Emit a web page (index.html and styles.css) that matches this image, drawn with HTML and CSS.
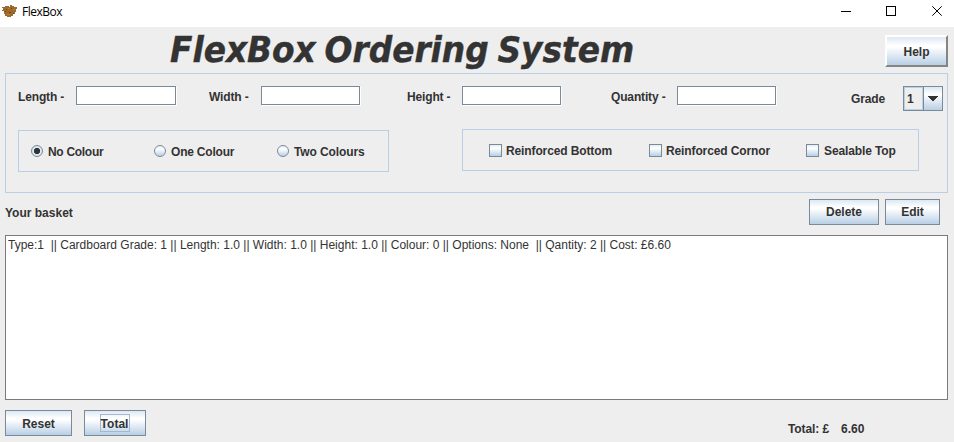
FILE: index.html
```html
<!DOCTYPE html>
<html lang="en">
<head>
<meta charset="utf-8">
<title>FlexBox</title>
<link rel="stylesheet" href="styles.css">
</head>
<body>
<div class="window">
  <header class="titlebar">
    <svg class="app-icon" width="15" height="13" viewBox="0 0 15 13"><path fill="#9b6a2c" d="M0 2h3V1h4v1h1V0h2v1h2v1h3v2h-1v3h-1v2h-2v2H9v1H5v-1H3V9H2V6H0V5h1V3H0z"/><path fill="#6d4218" d="M4 4h1v1H4zM9 3h1v1H9zM7 7h2v1H7zM3 6h1v1H3zM11 8h1v1h-1z"/><path fill="#b97c38" d="M6 3h2v1H6zM11 4h2v1h-2zM5 9h3v1H5z"/></svg>
    <span class="app-name">FlexBox</span>
    <svg class="controls" width="102" height="12" viewBox="0 0 102 12" fill="none" stroke="#000"><path d="M0 6.500h10M45.500 1.500h9v9h-9z" shape-rendering="crispEdges"/><path d="M91.300 1.300l9.400 9.400M100.700 1.300l-9.400 9.400"/></svg>
  </header>
  <div class="heading">
    <h1>FlexBox Ordering System</h1>
    <button class="help">Help</button>
  </div>
  <main class="order">
    <div class="fields">
      <label class="length">Length -</label><input class="w100">
      <label class="width">Width -</label><input>
      <label class="height">Height -</label><input>
      <label class="quantity">Quantity -</label><input>
      <label class="grade">Grade</label>
      <div class="combo"><span>1</span><i><svg width="10" height="5" viewBox="0 0 10 5" shape-rendering="crispEdges"><path fill="#333" d="M0 0h10v1H9v1H8v1H7v1H6v1H4V4H3V3H2V2H1V1H0z"/></svg></i></div>
    </div>
    <div class="choices">
      <div class="group colours">
        <div class="choice"><i class="radio on"></i><span class="t-no">No Colour</span></div>
        <div class="choice"><i class="radio"></i><span class="t-one">One Colour</span></div>
        <div class="choice"><i class="radio"></i><span class="t-two">Two Colours</span></div>
      </div>
      <div class="group options">
        <div class="choice bottom"><i class="check"></i><span>Reinforced Bottom</span></div>
        <div class="choice corner"><i class="check"></i><span>Reinforced Cornor</span></div>
        <div class="choice top"><i class="check"></i><span>Sealable Top</span></div>
      </div>
    </div>
  </main>
  <div class="basket-head">
    <span class="basket-title">Your basket</span>
    <button class="delete">Delete</button>
    <button class="edit">Edit</button>
  </div>
  <div class="basket">Type:1  || Cardboard Grade: 1 || Length: 1.0 || Width: 1.0 || Height: 1.0 || Colour: 0 || Options: None  || Qantity: 2 || Cost: £6.60</div>
  <footer>
    <button class="reset">Reset</button>
    <button class="total"><span>Total</span></button>
    <span class="sum-label">Total: £</span><span class="sum">6.60</span>
  </footer>
</div>
</body>
</html>
```
FILE: styles.css
```css
* { box-sizing: border-box; }
body { margin: 0; background: #eee; color: #333; font: bold 12px/14px "Liberation Sans", Arial, sans-serif; overflow: hidden; }
.window { width: 954px; height: 442px; }
.titlebar { height: 27px; background: #fff; display: flex; align-items: flex-start; color: #000; }
.app-icon { margin: 5px 0 0 2px; }
.app-name { margin: 5px 0 0 5px; width: 819px; font: 12px/14px "Open Sans", sans-serif; letter-spacing: -0.5px; }
.controls { margin-top: 5px; }
.heading { height: 46px; display: flex; }
h1 { margin: 2px 0 0 170px; width: 715px; font: italic bold 35px/42px "DejaVu Sans", sans-serif; font-stretch: condensed; letter-spacing: 0; word-spacing: -2.5px; -webkit-text-stroke: 0.4px #333; white-space: nowrap; transform: scaleX(1.042); transform-origin: 0 0; }
.heading { position: relative; }
button { font: inherit; color: inherit; padding: 0; height: 26px; border: 1px solid #7a8a99; background: linear-gradient(#dde8f3 0%, #fff 30%, #fff 36%, #b8cfe5 100%); text-align: center; }
.help { width: 63px; height: 32px; margin-top: 8px; padding-top: 1px; border: 2px solid; border-color: #fff #858585 #858585 #fff; }
.order { margin-left: 5px; width: 943px; height: 120px; border: 1px solid #b8cfe5; }
.fields { display: flex; height: 56px; padding: 12px 0 0 12px; }
.fields label { margin-top: 4px; height: 14px; white-space: nowrap; letter-spacing: -0.15px; }
.length { width: 58px; }
.width { width: 52px; margin-left: 33px; }
.height { width: 55px; margin-left: 47px; }
.quantity { width: 66px; margin-left: 50px; }
.fields .grade { width: 52px; margin: 6px 0 0 75px; }
input { width: 99px; height: 19px; padding: 0; border: 1px solid #7a8a99; background: #fff; border-radius: 0; box-shadow: 1px 1px #fff; }
.w100 { width: 100px; }
.combo { width: 40px; height: 25px; border: 1px solid #7a8a99; display: flex; }
.combo span { width: 19px; border: 1px solid #b8cfe5; padding: 4px 0 0 2px; }
.combo i { width: 19px; border-left: 1px solid #7a8a99; background: linear-gradient(#dde8f3, #fff 32%, #b8cfe5); display: flex; align-items: center; justify-content: center; }
.choices { display: flex; }
.group { display: flex; height: 42px; border: 1px solid #b8cfe5; }
.colours { width: 371px; margin-left: 12px; padding: 14px 0 0 12px; }
.options { width: 457px; margin: -1px 0 0 73px; padding: 14px 0 0 26px; letter-spacing: -0.12px; }
.choice { display: flex; flex: none; width: 123px; gap: 5px; white-space: nowrap; }
.colours .choice:last-child { width: 110px; }
.t-no { letter-spacing: -0.3px; }
.t-one { letter-spacing: -0.2px; }
.t-two { letter-spacing: -0.1px; }
.bottom, .corner { width: 160px; gap: 4px; }
.corner { width: 157px; }
.choice i { flex: none; border: 1px solid #7a8a99; background: linear-gradient(#e4edf6, #fff 30%, #b8cfe5); }
.radio { width: 12px; height: 12px; border-radius: 50%; }
.choice .on { background: radial-gradient(circle, #333 2.800px, #dde8f3 3.500px); }
.check { width: 13px; height: 13px; }
.basket-head { height: 42px; display: flex; padding-left: 5px; }
.basket-title { margin-top: 13px; width: 804px; }
.delete { width: 70px; margin-top: 6px; }
.edit { width: 55px; margin: 6px 0 0 6px; }
.basket { margin-left: 5px; width: 943px; height: 165px; border: 1px solid #7a7a80; background: #fff; padding: 2px; font-weight: normal; white-space: pre; }
footer { display: flex; padding: 10px 0 0 5px; }
.reset { width: 67px; padding-top: 1px; }
.total { width: 62px; margin-left: 12px; }
.total span { display: block; width: 30px; height: 18px; margin: 0 auto; border: 1px solid #a3b8cc; line-height: 18px; white-space: nowrap; text-indent: -1px; }
.sum-label { width: 53px; margin: 12px 0 0 642px; letter-spacing: -0.1px; }
.sum { margin-top: 12px; }
```
